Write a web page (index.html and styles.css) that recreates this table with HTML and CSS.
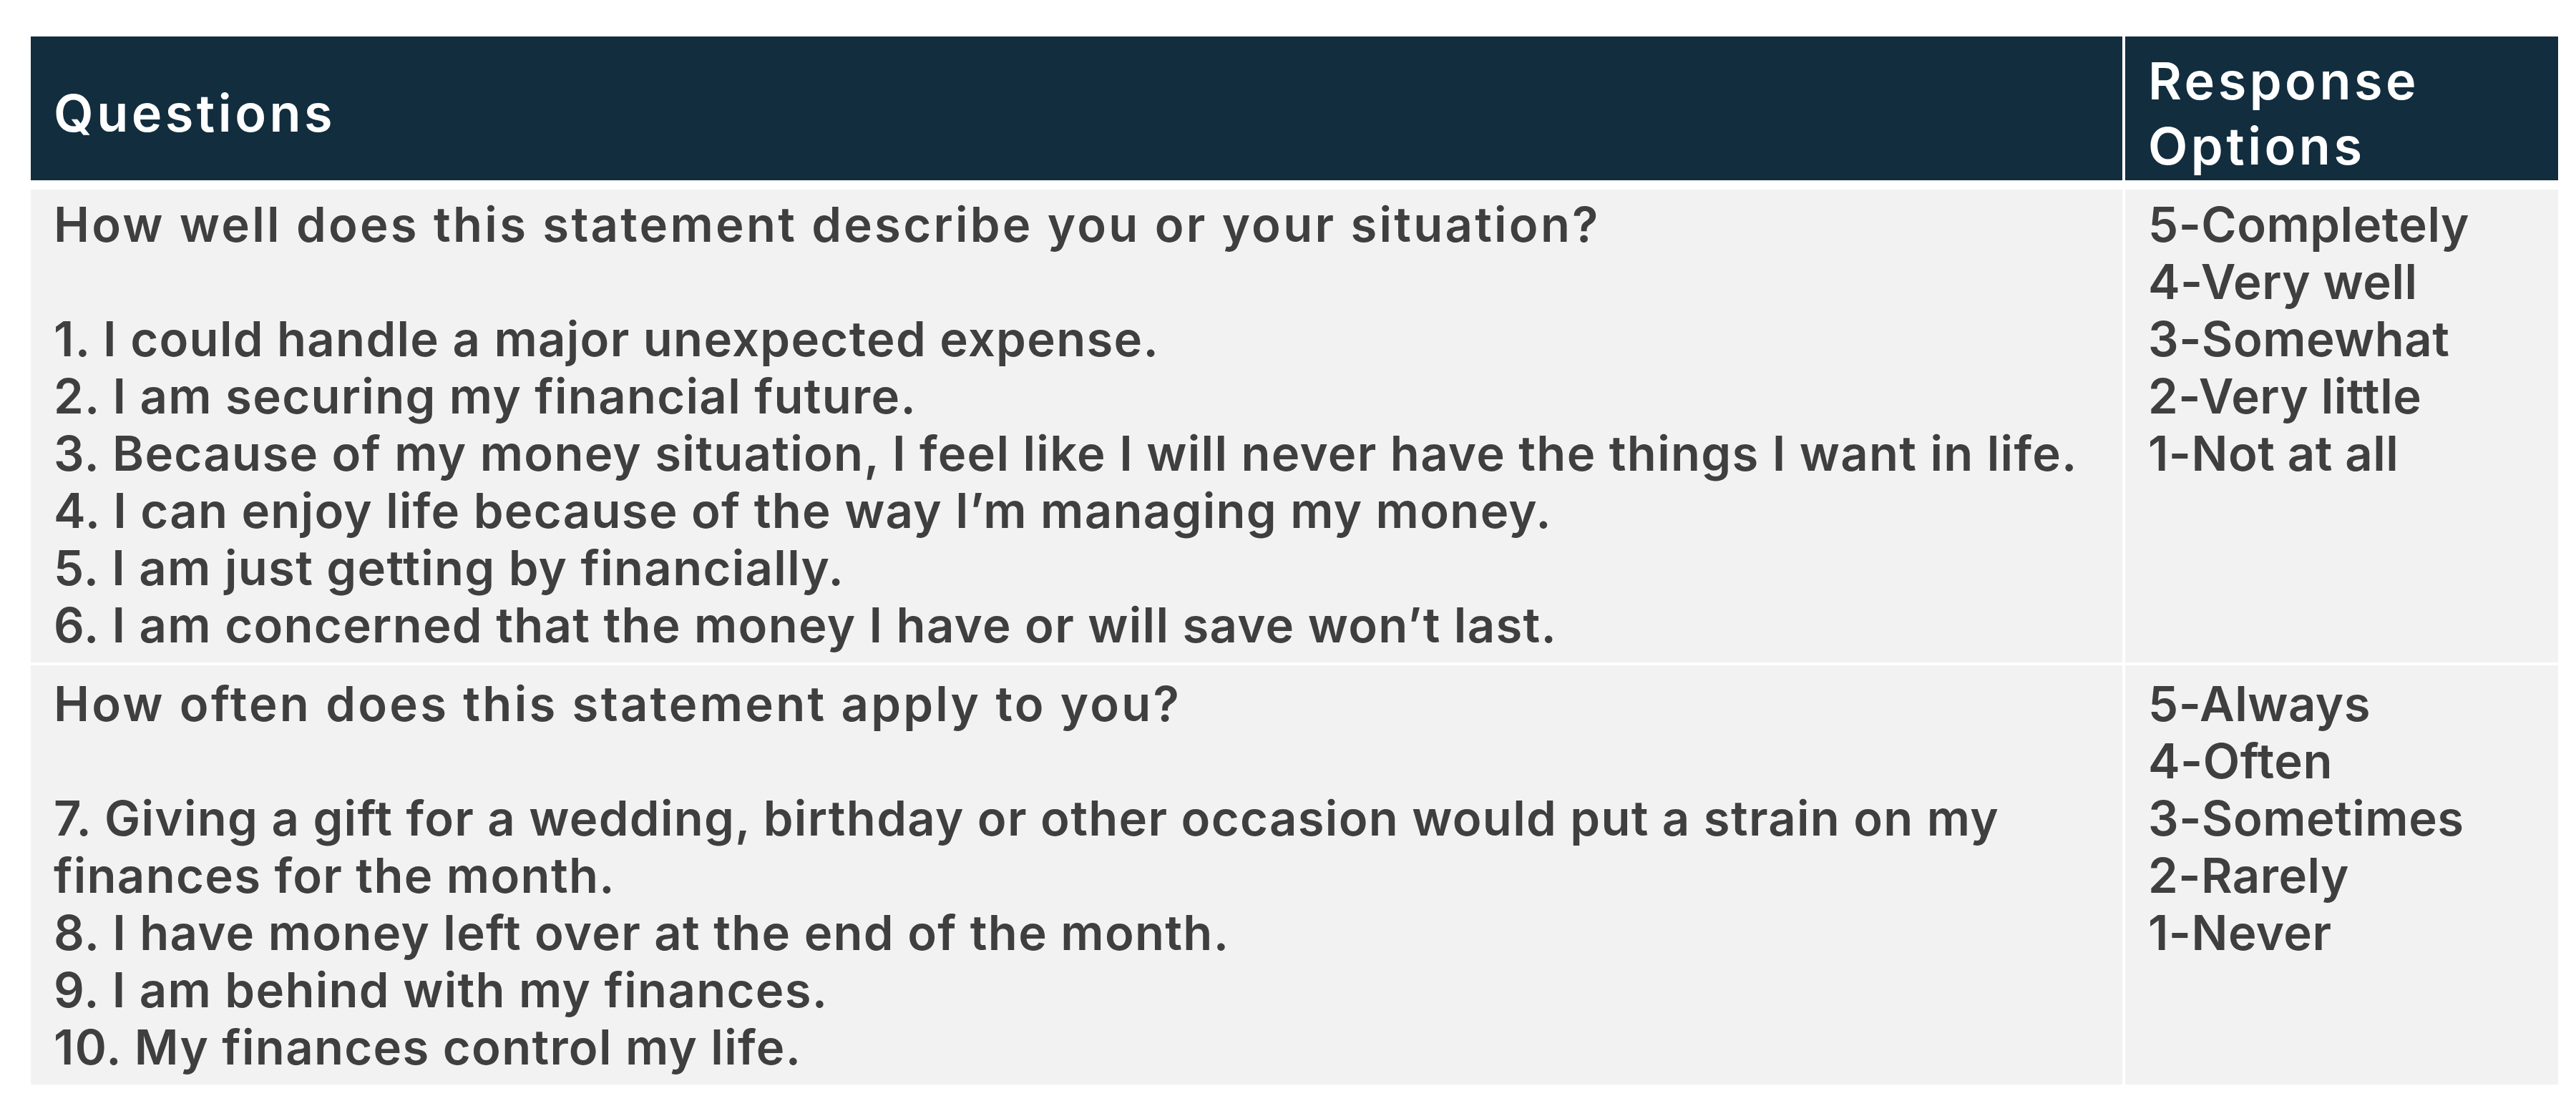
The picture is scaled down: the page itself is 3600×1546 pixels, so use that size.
FILE: index.html
```html
<!DOCTYPE html>
<html lang="en">
<head>
<meta charset="utf-8">
<title>Financial well-being questions</title>
<link rel="stylesheet" href="styles.css">
</head>
<body>
<div class="page">
  <div class="scale-table">
    <div class="cell head">Questions</div>
    <div class="cell head">Response<br>Options</div>

    <div class="cell body first">
      <p class="lead">How well does this statement describe you or your situation?</p>
      <ul class="items">
        <li>1. I could handle a major unexpected expense.</li>
        <li>2. I am securing my financial future.</li>
        <li>3. Because of my money situation, I feel like I will never have the things I want in life.</li>
        <li>4. I can enjoy life because of the way I&rsquo;m managing my money.</li>
        <li>5. I am just getting by financially.</li>
        <li>6. I am concerned that the money I have or will save won&rsquo;t last.</li>
      </ul>
    </div>
    <div class="cell body first">
      <ul class="options">
        <li>5-Completely</li>
        <li>4-Very well</li>
        <li>3-Somewhat</li>
        <li>2-Very little</li>
        <li>1-Not at all</li>
      </ul>
    </div>

    <div class="cell body second">
      <p class="lead">How often does this statement apply to you?</p>
      <ul class="items">
        <li>7. Giving a gift for a wedding, birthday or other occasion would put a strain on my<br>finances for the month.</li>
        <li>8. I have money left over at the end of the month.</li>
        <li>9. I am behind with my finances.</li>
        <li>10. My finances control my life.</li>
      </ul>
    </div>
    <div class="cell body second">
      <ul class="options">
        <li>5-Always</li>
        <li>4-Often</li>
        <li>3-Sometimes</li>
        <li>2-Rarely</li>
        <li>1-Never</li>
      </ul>
    </div>
  </div>
</div>
</body>
</html>
```

FILE: styles.css
```css
html, body {
  margin: 0;
  padding: 0;
  background: #ffffff;
}

.page {
  padding: 51px 25px 30px 43px;
  font-family: "Inter", "Liberation Sans", sans-serif;
}

.scale-table {
  display: grid;
  grid-template-columns: 2923px 605px;
  column-gap: 4px;
  row-gap: 4px;
}

.cell {
  box-sizing: border-box;
  padding-left: 32px;
  padding-right: 20px;
}

.head {
  height: 201px;
  margin-bottom: 9px;
  padding-top: 12px;
  display: flex;
  align-items: center;
  background: #122d3e;
  color: #ffffff;
  font-size: 72px;
  font-weight: 600;
  line-height: 91px;
  letter-spacing: 4.5px;
}

.body {
  background: #f2f2f2;
  color: #3f3f3f;
  font-size: 67px;
  font-weight: 600;
  line-height: 80px;
  letter-spacing: 1.3px;
}

.body.first {
  padding-top: 9px;
  padding-bottom: 12px;
}

.body.second {
  padding-top: 14px;
  padding-bottom: 12px;
}

.lead {
  margin: 0;
  letter-spacing: 3.25px;
}

.items,
.options {
  list-style: none;
  margin: 0;
  padding: 0;
}

.items {
  margin-top: 80px;
}

.options {
  letter-spacing: 0.5px;
}
```
